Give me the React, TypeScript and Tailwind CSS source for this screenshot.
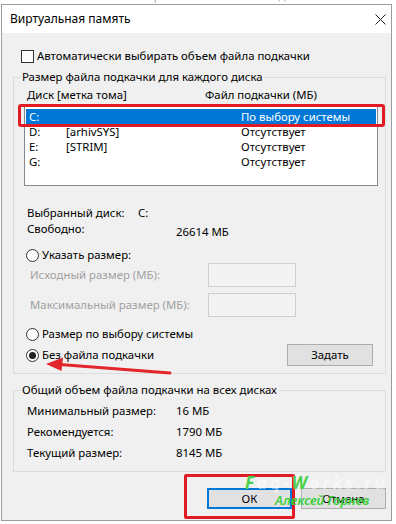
import React from 'react';

const Radio: React.FC<{ checked?: boolean }> = ({ checked }) => (
  <span className="w-[13px] h-[13px] rounded-full border border-[#333] bg-white flex items-center justify-center shrink-0">
    {checked && <span className="w-[7px] h-[7px] rounded-full bg-[#222]" />}
  </span>
);

const rows = [
  { drive: 'C:', label: '', size: 'По выбору системы', selected: true },
  { drive: 'D:', label: '[arhivSYS]', size: 'Отсутствует' },
  { drive: 'E:', label: '[STRIM]', size: 'Отсутствует' },
  { drive: 'G:', label: '', size: 'Отсутствует' },
];

const totals = [
  ['Минимальный размер:', '16 МБ'],
  ['Рекомендуется:', '1790 МБ'],
  ['Текущий размер:', '8145 МБ'],
];

const App: React.FC = () => {
  return (
    <div className="relative w-[396px] h-[524px] bg-white overflow-hidden font-['Noto_Sans',sans-serif] text-[11.4px] leading-[16px] text-black">
      {/* text of the window behind, cut off */}
      <div className="h-[4px] overflow-hidden flex justify-center">
        <span className="-mt-[12px] text-[#b0b0b0] whitespace-nowrap">Оптимизировать выполнение задач</span>
      </div>

      <div className="ml-[1px] w-[391px] h-[517px] border border-[#9c9c9c] flex flex-col">
        <header className="h-[28px] bg-white flex items-center justify-between pl-[8px] pr-[5px]">
          <span className="text-[12px]">Виртуальная память</span>
          <svg width="11" height="11" viewBox="0 0 11 11">
            <path d="M0.5 0.5L10.5 10.5M10.5 0.5L0.5 10.5" stroke="#222" strokeWidth="1" />
          </svg>
        </header>

        <main className="flex-1 bg-[#f0f0f0] flex flex-col pl-[11px] pr-[4px] pt-[16px]">
          <label className="h-[14px] flex items-center gap-[3px] ml-[8px]">
            <span className="w-[13px] h-[13px] border border-[#333] bg-white shrink-0" />
            <span>Автоматически выбирать объем файла подкачки</span>
          </label>

          <fieldset className="mt-[6px] w-[373px] min-w-0 border border-[#dcdcdc] pb-[7px]">
            <legend className="ml-[7px] px-[1px]">Размер файла подкачки для каждого диска</legend>
            <div className="flex flex-col pl-[10px] pr-[12px]">
              <div className="mt-[2px] h-[16px] flex pl-[3px]">
                <span className="w-[178px]">Диск [метка тома]</span>
                <span>Файл подкачки (МБ)</span>
              </div>
              <div className="mt-[3px] w-[354px] max-w-none h-[80px] border border-[#828790] bg-white py-[2px] flex flex-col">
                {rows.map((r) => (
                  <div
                    key={r.drive}
                    className={`h-[15px] flex items-center pl-[3px] mx-[1px] ${r.selected ? 'bg-[#0078d7] text-white' : ''}`}
                  >
                    <span className="w-[37px] shrink-0">{r.drive}</span>
                    <span className="w-[175px] shrink-0">{r.label}</span>
                    <span>{r.size}</span>
                  </div>
                ))}
              </div>

              <div className="mt-[19px] h-[16px] flex pl-[3px]">
                <span className="w-[111px]">Выбранный диск:</span>
                <span>C:</span>
              </div>
              <div className="h-[16px] flex pl-[3px]">
                <span className="w-[149px]">Свободно:</span>
                <span className="mt-[3px]">26614 МБ</span>
              </div>

              <label className="mt-[10px] h-[16px] flex items-center gap-[3px] ml-[2px]">
                <Radio />
                <span>Указать размер:</span>
              </label>
              <div className="h-[24px] flex items-center text-[#a0a0a0]">
                <span className="w-[184px] pl-[6px]">Исходный размер (МБ):</span>
                <span className="w-[88px] h-[24px] border border-[#cfcfcf] bg-[#f3f3f3]" />
              </div>
              <div className="mt-[6px] h-[24px] flex items-center text-[#a0a0a0]">
                <span className="w-[184px] pl-[6px]">Максимальный размер (МБ):</span>
                <span className="w-[88px] h-[24px] border border-[#cfcfcf] bg-[#f3f3f3]" />
              </div>

              <label className="mt-[9px] h-[16px] flex items-center gap-[3px] ml-[2px]">
                <Radio />
                <span>Размер по выбору системы</span>
              </label>
              <div className="mt-[2px] h-[22px] flex items-center justify-between">
                <label className="flex items-center gap-[3px] ml-[2px]">
                  <Radio checked />
                  <span>Без файла подкачки</span>
                </label>
                <button className="w-[86px] h-[22px] border border-[#adadad] bg-[#e1e1e1]">Задать</button>
              </div>
            </div>
          </fieldset>

          <fieldset className="mt-[8px] w-[373px] min-w-0 border border-[#dcdcdc] pb-[8px]">
            <legend className="ml-[7px] px-[1px]">Общий объем файла подкачки на всех дисках</legend>
            <div className="mt-[2px] flex flex-col pl-[13px]">
              {totals.map(([k, v]) => (
                <div key={k} className="h-[21px] flex items-center">
                  <span className="w-[149px]">{k}</span>
                  <span>{v}</span>
                </div>
              ))}
            </div>
          </fieldset>

          <div className="mt-[16px] flex justify-end gap-[9px] pr-[1px]">
            <button className="w-[85px] h-[21px] border-2 border-[#0078d7] bg-[#e1e1e1]">ОК</button>
            <button className="w-[85px] h-[21px] border border-[#adadad] bg-[#e1e1e1]">Отмена</button>
          </div>
        </main>
      </div>

      {/* annotations drawn over the screenshot */}
      <div className="absolute left-[18px] top-[104px] w-[367px] h-[23px] border-[3px] border-[#e01b24] rounded-[3px]" />
      <div className="absolute left-[184px] top-[474px] w-[111px] h-[45px] border-[3px] border-[#e01b24] rounded-[2px]" />
      <svg className="absolute left-0 top-0 pointer-events-none" width="396" height="524" viewBox="0 0 396 524">
        <path d="M170 373 L60 364.5" stroke="#e3262b" strokeWidth="3" strokeLinecap="round" />
        <path d="M46 364 L63 357.5 L61.5 371 Z" fill="#e3262b" />
      </svg>
      <div className="absolute left-[245px] top-[473px] text-[17px] leading-[20px] italic font-bold tracking-[3px] text-white/50 whitespace-nowrap">
        <span className="text-[#4ad04a]">F</span>aq-<span className="text-[#4ad04a]">W</span>orks.ru
      </div>
      <div className="absolute left-[275px] top-[492px] text-[13px] leading-[16px] italic font-semibold text-[#3ccf3c] whitespace-nowrap">
        Алексей Горнев
      </div>
    </div>
  );
};

export default App;
